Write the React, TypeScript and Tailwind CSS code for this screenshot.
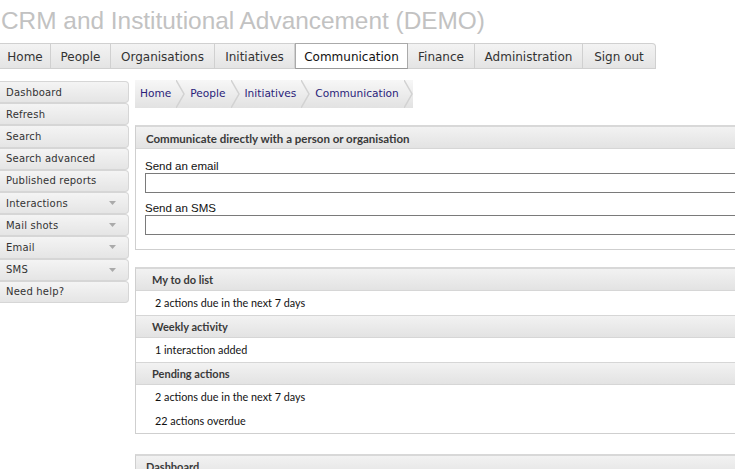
import React from "react";

const verdana = { fontFamily: '"DejaVu Sans", Verdana, sans-serif' };
const segoe = { fontFamily: 'Lato, "Open Sans", sans-serif' };
const arial = { fontFamily: '"Liberation Sans", Arial, sans-serif' };

const tabs = [
  { label: "Home", w: 51 },
  { label: "People", w: 60 },
  { label: "Organisations", w: 104 },
  { label: "Initiatives", w: 80 },
  { label: "Communication", w: 113, active: true },
  { label: "Finance", w: 67 },
  { label: "Administration", w: 108 },
  { label: "Sign out", w: 73 },
];

const sideItems = [
  { label: "Dashboard" },
  { label: "Refresh" },
  { label: "Search" },
  { label: "Search advanced" },
  { label: "Published reports" },
  { label: "Interactions", menu: true },
  { label: "Mail shots", menu: true },
  { label: "Email", menu: true },
  { label: "SMS", menu: true },
  { label: "Need help?" },
];

const crumbs = ["Home", "People", "Initiatives", "Communication"];

function Chevron() {
  return (
    <svg width="9" height="28" viewBox="0 0 9 28" className="shrink-0">
      <polyline points="0,0 8,14 0,28" fill="none" stroke="#d2d2d2" strokeWidth="1.5" />
    </svg>
  );
}

function PanelHeader({ children, inset = "pl-[16px]" }: { children: React.ReactNode; inset?: string }) {
  return (
    <div
      className={`h-[22px] flex items-center pt-[2px] ${inset} text-[11px] font-bold text-[#3a3a3a] bg-gradient-to-b from-[#f2f2f2] to-[#e3e3e3] border-b border-[#d6d6d6]`}
      style={segoe}
    >
      {children}
    </div>
  );
}

function Row({ children }: { children: React.ReactNode }) {
  return (
    <div className="h-[24px] flex items-center pt-[1px] pl-[19px] text-[10.8px] text-[#111]" style={segoe}>
      {children}
    </div>
  );
}

export default function App() {
  return (
    <div className="w-[735px] h-[469px] overflow-hidden bg-white">
      <div className="pt-[6px] pl-[1px] text-[24.4px] leading-[30px] text-[#c2c2c2] whitespace-nowrap" style={arial}>
        CRM and Institutional Advancement (DEMO)
      </div>

      <div className="mt-[7px] flex h-[26px]" style={verdana}>
        {tabs.map((t, i) => (
          <div
            key={t.label}
            style={{ width: t.w }}
            className={
              t.active
                ? "shrink-0 flex items-center justify-center pt-[1px] text-[12px] text-[#111] bg-white border border-[#aaa] border-b-[#999]"
                : `shrink-0 flex items-center justify-center pt-[1px] text-[12px] text-[#333] bg-gradient-to-b from-[#f3f3f3] to-[#e4e4e4] border-y border-r border-[#d0d0d0] ${i === tabs.length - 1 ? "rounded-tr-[4px]" : ""}`
            }
          >
            {t.label}
          </div>
        ))}
      </div>

      <div className="flex mt-[11px]">
        <div className="w-[129px] shrink-0 pt-[1px]" style={verdana}>
          {sideItems.map((s) => (
            <div
              key={s.label}
              className="h-[22.2px] flex items-center justify-between pl-[6px] pr-[12px] text-[10px] tracking-[0.2px] text-[#333] bg-gradient-to-b from-[#f4f4f4] to-[#e5e5e5] border border-l-0 border-[#d6d6d6] rounded-r-[4px]"
            >
              <span>{s.label}</span>
              {s.menu && (
                <svg width="7" height="4" viewBox="0 0 7 4">
                  <polygon points="0,0 7,0 3.5,4" fill="#aaa" />
                </svg>
              )}
            </div>
          ))}
        </div>

        <div className="ml-[6px] w-[700px] shrink-0">
          <div className="flex h-[28px] w-fit" style={verdana}>
            {crumbs.map((c) => (
              <div key={c} className="flex items-center bg-gradient-to-b from-[#f7f7f7] to-[#e2e2e2]">
                <span className="text-[10.6px] text-[#2a1d7a] pl-[5px] pr-[5px]">{c}</span>
                <Chevron />
              </div>
            ))}
          </div>

          <div className="mt-[17px] border border-[#cfcfcf] border-t-2 border-t-[#d8d8d8] h-[125px]">
            <PanelHeader inset="pl-[10px]">
              <span className="text-[11.5px]">Communicate directly with a person or organisation</span>
            </PanelHeader>
            <div className="px-[9px] pt-[10px]" style={arial}>
              <div className="text-[11.5px] leading-[14px] text-[#111]">Send an email</div>
              <div className="h-[20px] border border-[#7a7a7a]" />
              <div className="mt-[8px] text-[11.5px] leading-[14px] text-[#111]">Send an SMS</div>
              <div className="h-[20px] border border-[#7a7a7a]" />
            </div>
          </div>

          <div className="mt-[17px] border border-[#cfcfcf] border-t-2 border-t-[#d8d8d8]">
            <PanelHeader>My to do list</PanelHeader>
            <div className="border-b border-[#d6d6d6]">
              <Row>2 actions due in the next 7 days</Row>
            </div>
            <PanelHeader>Weekly activity</PanelHeader>
            <div className="border-b border-[#d6d6d6]">
              <Row>1 interaction added</Row>
            </div>
            <PanelHeader>Pending actions</PanelHeader>
            <div>
              <Row>2 actions due in the next 7 days</Row>
              <Row>22 actions overdue</Row>
            </div>
          </div>

          <div className="mt-[20px] border border-[#cfcfcf] border-t-2 border-t-[#d8d8d8]">
            <PanelHeader inset="pl-[10px]">Dashboard</PanelHeader>
          </div>
        </div>
      </div>
    </div>
  );
}
